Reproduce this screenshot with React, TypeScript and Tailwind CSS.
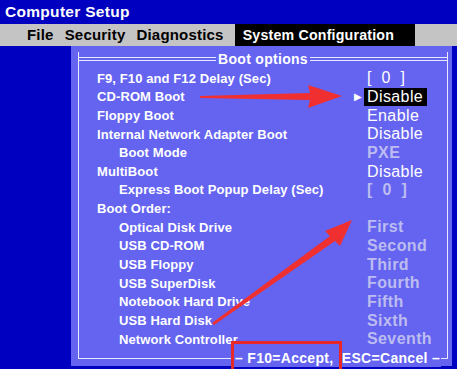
import React from 'react';

type Row = {
  label: string;
  indent?: boolean;
  value?: string;
  dim?: boolean;
  selected?: boolean;
};

const ROWS: Row[] = [
  { label: 'F9, F10 and F12 Delay (Sec)', value: '[  0  ]' },
  { label: 'CD-ROM Boot', value: 'Disable', selected: true },
  { label: 'Floppy Boot', value: 'Enable' },
  { label: 'Internal Network Adapter Boot', value: 'Disable' },
  { label: 'Boot Mode', indent: true, value: 'PXE', dim: true },
  { label: 'MultiBoot', value: 'Disable' },
  { label: 'Express Boot Popup Delay (Sec)', indent: true, value: '[  0  ]', dim: true },
  { label: 'Boot Order:' },
  { label: 'Optical Disk Drive', indent: true, value: 'First', dim: true },
  { label: 'USB CD-ROM', indent: true, value: 'Second', dim: true },
  { label: 'USB Floppy', indent: true, value: 'Third', dim: true },
  { label: 'USB SuperDisk', indent: true, value: 'Fourth', dim: true },
  { label: 'Notebook Hard Drive', indent: true, value: 'Fifth', dim: true },
  { label: 'USB Hard Disk', indent: true, value: 'Sixth', dim: true },
  { label: 'Network Controller', indent: true, value: 'Seventh', dim: true },
];

const MENU = ['File', 'Security', 'Diagnostics'];

export default function App() {
  return (
    <div className="relative w-[457px] h-[369px] overflow-hidden bg-[#0000c0] font-['Liberation_Sans',Arial,sans-serif]">
      {/* Title bar */}
      <div className="h-[24px] pl-[5px] text-white text-[15.5px] font-bold leading-[24px] tracking-[0.3px]">
        Computer Setup
      </div>

      {/* Menu bar */}
      <div className="h-[22px] bg-[#c4c4c4] flex items-stretch text-[15px] font-bold text-black leading-[22px] tracking-[0.2px]">
        <div className="w-[27px]" />
        {MENU.map(m => (
          <span key={m} className="mr-[11px]">{m}</span>
        ))}
        <div className="w-[180px] bg-black text-white pl-[8px] text-[14.2px]">System Configuration</div>
      </div>

      {/* Body */}
      <div className="flex h-[323px]">
        <div className="w-[71px] shrink-0" />
        <div className="w-[381px] h-[320px] bg-[#6464f0] pl-[7px] pr-[4px] pt-[6px]">
          <div className="relative w-[370px] h-[307px] border-x border-b border-[#e8e8ff]">
            {/* Top double line with title */}
            <div className="flex items-center h-[14px] -mx-px">
              <div className="flex-1 h-[4px] border-y border-[#e8e8ff]" />
              <span className="px-[2px] text-white text-[14px] font-bold leading-[14px] tracking-[0.3px]">Boot options</span>
              <div className="flex-1 h-[4px] border-y border-[#e8e8ff]" />
            </div>

            {/* Rows */}
            <div className="pt-[3px] flex flex-col">
              {ROWS.map(r => (
                <div key={r.label} className="flex items-center h-[18.65px]">
                  <span
                    className={`${r.indent ? 'w-[288px] pl-[40px]' : 'w-[288px] pl-[18px]'} text-white text-[13px] font-bold tracking-[0.1px] whitespace-nowrap`}
                  >
                    {r.label}
                  </span>
                  {r.value && (
                    <span className="relative flex items-center">
                      {r.selected && (
                        <span className="absolute -left-[13px] text-white text-[10px]">▶</span>
                      )}
                      <span
                        className={`text-[16px] leading-[18px] tracking-[0.4px] whitespace-pre ${
                          r.selected ? 'bg-black text-white -ml-[3px] pl-[3px] pr-[4px]' : r.dim ? 'text-[#bcbcf0] font-bold' : 'text-white'
                        }`}
                      >
                        {r.value}
                      </span>
                    </span>
                  )}
                </div>
              ))}
            </div>

            {/* Bottom legend over the frame line */}
            <div className="absolute -bottom-[9px] left-[155px] flex items-center bg-[#6464f0] px-[1px] text-white text-[14px] font-bold leading-[18px] tracking-[0.3px] whitespace-pre">
              <span>– F10=Accept,  ESC=Cancel –</span>
            </div>
          </div>
        </div>
        <div className="flex-1" />
      </div>

      {/* Annotations */}
      <svg className="absolute inset-0 pointer-events-none" width="457" height="369" viewBox="0 0 457 369">
        <polygon points="200,96 310,93 308,85 342,96 308,108 310,100 200,98" fill="#f03030" />
        <polygon points="212,323 330,236 325,231 352,220 340,246 335,241 214,325" fill="#f03030" />
        <rect x="232.5" y="342.5" width="108" height="30" fill="none" stroke="#e82828" strokeWidth="3" />
      </svg>
    </div>
  );
}
